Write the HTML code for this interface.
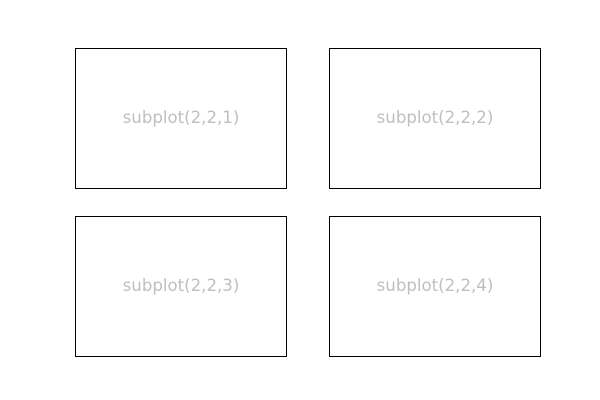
<!DOCTYPE html>
<html><head><style>
body{margin:0;width:600px;height:400px;background:#fff;position:relative;overflow:hidden}
.b{position:absolute;width:210px;height:139px;border:1px solid #000;box-sizing:content-box;display:flex;align-items:center;justify-content:center;font-family:"DejaVu Sans",sans-serif;font-size:16.6px;color:#bfbfbf}
.b span{position:relative;top:-1px}
</style></head><body>
<div class="b" style="left:75px;top:48px"><span>subplot(2,2,1)</span></div>
<div class="b" style="left:329px;top:48px"><span>subplot(2,2,2)</span></div>
<div class="b" style="left:75px;top:216px"><span>subplot(2,2,3)</span></div>
<div class="b" style="left:329px;top:216px"><span>subplot(2,2,4)</span></div>
</body></html>
